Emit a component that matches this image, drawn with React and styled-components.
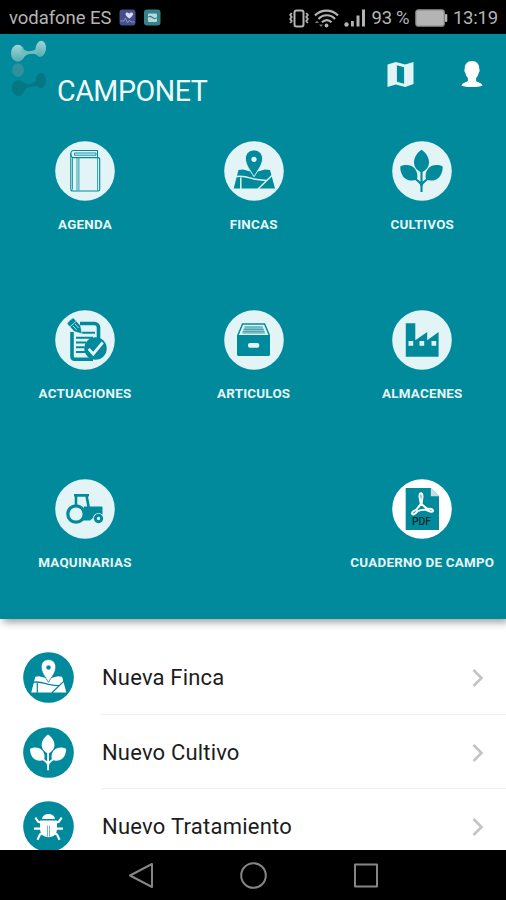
import React from "react";
import styled, { createGlobalStyle } from "styled-components";

const TEAL = "#008a9b";
const PALE = "#e2f4f5";

const GlobalStyle = createGlobalStyle`
  body { margin: 0; background: #fff; font-family: Roboto, "Liberation Sans", sans-serif; }
  svg { display: block; flex: none; }
`;

const Screen = styled.div`
  width: 506px;
  height: 900px;
  display: flex;
  flex-direction: column;
  overflow: hidden;
  background: #fff;
`;

const StatusBar = styled.div`
  height: 34px;
  flex: none;
  display: flex;
  align-items: center;
  justify-content: space-between;
  padding: 2px 8px 0 9px;
  box-sizing: border-box;
  background: #000;
  color: #b4b4b4;
`;

const StatusGroup = styled.div`
  display: flex;
  align-items: center;
  gap: ${(p) => p.$gap}px;
`;

const StatusText = styled.span`
  font-size: 18.5px;
  line-height: 22px;
  white-space: nowrap;
  letter-spacing: ${(p) => p.$track || 0}px;
`;

const Panel = styled.section`
  height: 585px;
  flex: none;
  position: relative;
  box-sizing: border-box;
  background: ${TEAL};
  box-shadow: 3px 3px 8px rgba(0, 0, 0, 0.4);
`;

const Header = styled.header`
  height: 107px;
  display: flex;
  align-items: flex-start;
  padding: 6px 23px 0 10px;
  box-sizing: border-box;
`;

const Title = styled.h1`
  margin: 34px auto 0 9px;
  font-size: 28.6px;
  line-height: 34px;
  font-weight: 400;
  letter-spacing: -0.45px;
  color: #f2fbfc;
`;

const HeaderActions = styled.div`
  display: flex;
  align-items: center;
  gap: 47px;
  margin-top: 21px;
`;

const Menu = styled.nav`
  display: grid;
  grid-template-columns: repeat(3, 168.67px);
  grid-auto-rows: 168.8px;
  padding-left: 0.7px;
`;

const MenuItem = styled.div`
  display: flex;
  flex-direction: column;
  align-items: center;
  grid-column: ${(p) => p.$column || "auto"};
`;

const MenuLabel = styled.span`
  margin-top: 15px;
  font-size: 13.4px;
  line-height: 18px;
  font-weight: 700;
  white-space: nowrap;
  letter-spacing: 0.22px;
  color: #e6f6f7;
`;

const List = styled.div`
  flex: 1;
  min-height: 0;
  overflow: hidden;
  padding-top: 21.5px;
`;

const ListRow = styled.div`
  height: 74.4px;
  display: flex;
  align-items: center;
  padding-left: 22.5px;
`;

const RowBody = styled.div`
  flex: 1;
  height: 100%;
  box-sizing: border-box;
  display: flex;
  align-items: center;
  justify-content: space-between;
  margin-left: 27px;
  padding: 2.6px 20px 0 1.5px;
  border-bottom: 1px solid #f0f0f0;
`;

const RowLabel = styled.span`
  font-size: 22px;
  line-height: 28px;
  letter-spacing: ${(p) => p.$track}px;
  color: #1c1c1c;
`;

const NavBar = styled.div`
  height: 50px;
  flex: none;
  display: flex;
  align-items: center;
  justify-content: center;
  gap: 86px;
  background: #000;
`;

const Disc = ({ size = 60, bg = PALE, children }) => (
  <svg width={size} height={size} viewBox="0 0 60 60">
    <circle cx="30" cy="30" r="29.8" fill={bg} />
    {children}
  </svg>
);

const Book = () => (
  <g fill="none" stroke={TEAL} strokeWidth="1.100" strokeLinejoin="round">
    <path d="M18.500 9.500H42.500v7.100H18.500c-3.600 0-3.600-7.100 0-7.100z" />
    <path d="M19.500 12H41v2.200H19.500z" strokeWidth="0.900" />
    <path d="M15.800 12.500V48c0 1.300.8 2 2 2H43c1.100 0 1.700-.7 1.700-1.700V18.300c0-1-.7-1.700-1.700-1.700" />
    <path d="M42.600 17v32.500M22 17v32.500M23.900 17v32.500M17.500 16v32.500" strokeWidth="0.800" />
  </g>
);

const FieldPin = ({ fg, bg }) => (
  <g>
    <path d="M14.500 29l4.500-.5 11 3 11-3 5 .5 5 18.500H9.700z" fill={fg} />
    <path d="M16.800 36.500V48M11 35.800c8-1.800 13 .6 19 2.200 4 .8 8 1.500 13 1.500M50 32.500L34 48" fill="none" stroke={bg} strokeWidth="1.500" />
    <path d="M30 8.900c5 0 8.600 3.700 8.600 8.600 0 6.400-4.600 11.500-8.600 18.200-4-6.700-8.600-11.800-8.600-18.200 0-4.900 3.600-8.600 8.600-8.600z" fill={fg} stroke={bg} strokeWidth="1" />
    <circle cx="30" cy="18.300" r="2.600" fill={bg} />
  </g>
);

const Plant = ({ fg }) => (
  <g>
    <g fill={fg}>
      <path d="M29.500 8.700c4.500 2.800 7.600 8 7.500 12.800-.1 4.300-2.500 7.600-7.500 10-5-2.400-7.400-5.700-7.500-10 -.1-4.800 3-10 7.500-12.800z" />
      <path d="M8.300 25.500c4.700-2.300 11.200-2 14.600 2.200 2.600 3.200 3 7 2 11.100-4.300 1.300-9 1.100-12-1.500-3.400-2.900-4.700-7.700-4.600-11.800z" />
      <path d="M50.700 25.500c-4.700-2.300-11.200-2-14.600 2.200-2.600 3.200-3 7-2 11.100 4.300 1.300 9 1.100 12-1.500 3.400-2.900 4.700-7.700 4.600-11.800z" />
    </g>
    <path d="M29.500 29v22M23.500 37.500c2 3.500 6 3 6 8M35.500 37.500c-2 3.500-6 3-6 8" fill="none" stroke={fg} strokeWidth="2.100" />
  </g>
);

const Checklist = () => (
  <g>
    <path d="M25 13.500h14.500a4 4 0 0 1 4 4V30M17 22v24.500a2.600 2.600 0 0 0 3 2.700H38" fill="none" stroke={TEAL} strokeWidth="3.600" />
    <path d="M27 22.800H40M21 27.700h17M21 32.500h10M21 37.200h8.500M21 42h9" stroke={TEAL} strokeWidth="2" />
    <circle cx="40.500" cy="38.500" r="11.200" fill={TEAL} />
    <path d="M33.700 38.800l4.500 5.200 9.500-11.500" fill="none" stroke={PALE} strokeWidth="2.800" />
    <g transform="rotate(-42 20 16)">
      <path d="M15.700 9.300c0-1.200 8.600-1.200 8.600 0v10.200L20 26.500l-4.300-7z" fill={TEAL} stroke={PALE} strokeWidth="0.500" />
      <path d="M16 13.200h8M18.600 14.500v5.500M21.400 14.500v5.500" stroke={PALE} strokeWidth="0.700" />
    </g>
  </g>
);

const FileBox = () => (
  <g>
    <path d="M13 25h33v19.500c0 .8-.6 1.400-1.400 1.400H14.400c-.8 0-1.400-.6-1.400-1.400z" fill={TEAL} />
    <path d="M13.800 25.500L18.600 14h22l4.800 11.500" fill="none" stroke={TEAL} strokeWidth="1.500" />
    <path d="M20.500 17h18.300l2.500 7H18z" fill="#93c9cd" />
    <path d="M20.500 16.800h18.300M19.500 19.300h20.300M18.500 21.800h22.300" stroke={TEAL} strokeWidth="0.700" />
    <rect x="24" y="33" width="11.300" height="4.700" rx="2" fill={PALE} />
  </g>
);

const Factory = () => (
  <g>
    <path d="M13.800 13.200h9.500v17L35.200 22v8.200L46.600 22v24.700H13.800z" fill={TEAL} />
    <path d="M16.500 31h4.700v4.700h-4.700zM27.500 31h4.700v4.700h-4.700zM39.500 31h4.700v4.700h-4.700z" fill={PALE} />
  </g>
);

const Tractor = () => (
  <g>
    <path d="M29 27.500H46.500c.5 0 1 .4 1 1V39h-9.500l-3 2.500h-7z" fill={TEAL} />
    <path d="M21 29V16.500h10.500l2.300 12.500M19 16.300h15" fill="none" stroke={TEAL} strokeWidth="2.600" />
    <circle cx="21" cy="35" r="8.200" fill={PALE} stroke={TEAL} strokeWidth="3.200" />
    <circle cx="43.500" cy="39.500" r="5.500" fill={PALE} />
    <circle cx="43.500" cy="39.500" r="3.200" fill={PALE} stroke={TEAL} strokeWidth="3" />
  </g>
);

const PdfText = styled.text`
  font: 500 10px Roboto, sans-serif;
`;

const Pdf = () => (
  <g>
    <path d="M13.700 9h25l8.300 8.300V51H13.700z" fill={TEAL} />
    <path d="M38.800 9v8.200H47z" fill="#c3dfe3" />
    <g fill={TEAL} stroke="#fff" strokeWidth="2" strokeLinejoin="round">
      <path d="M28.900 25c-1-4.500-2.500-10.500 0-10.700 2.700.2 1.200 6.200.6 10.700l5.200 4.400c3.200.2 6.600.6 6.200 2.600-.8 1.800-4.300 0-7-1.300-3.200-.3-6 .4-8.300 1.500-1.800 2.400-4.300 4-5.400 2.700-.9-1.500 1.900-3.200 4.200-4.300z" />
    </g>
    <PdfText x="20" y="46.300" textLength="19" lengthAdjust="spacingAndGlyphs" fill="#022a30">PDF</PdfText>
  </g>
);

const Bug = () => (
  <g fill="none" stroke="#fff" strokeWidth="2.500">
    <path d="M22.500 21.200c0-8 15-8 15 0z" fill="#fff" stroke="none" />
    <path d="M20 23h20v9c0 7-4 10.500-10 10.500S20 39 20 32z" fill="#fff" stroke="none" />
    <path d="M28.800 29v13M31.200 29v13" stroke={TEAL} strokeWidth="0.700" />
    <path d="M14.500 19.500l3.500 5 5 1.500M45.500 19.500l-3.500 5-5 1.500M13 32.500h10M47 32.500H37M17 45.500l3-6 4-2.500M43 45.500l-3-6-4-2.500" />
  </g>
);

const Logo = () => (
  <svg width="38" height="56" viewBox="0 0 38 56">
    <defs>
      <linearGradient id="molecule" x1="0" y1="0" x2="0" y2="1">
        <stop offset="0" stopColor="#9fd5d6" />
        <stop offset="1" stopColor="#55acb3" />
      </linearGradient>
    </defs>
    <ellipse cx="7.800" cy="13.300" rx="6.800" ry="8.500" fill="url(#molecule)" />
    <ellipse cx="30.700" cy="8.800" rx="5.300" ry="8" transform="rotate(8 30.700 8.800)" fill="url(#molecule)" />
    <path d="M11 7c4 5 10 5.500 16 1.500v6c-6-1.500-11-.5-14 4z" fill="#72bcc0" />
    <ellipse cx="8" cy="30" rx="6" ry="6.700" fill="#2e919b" />
    <g fill="#057783">
      <ellipse cx="8.500" cy="48" rx="6.300" ry="8" />
      <ellipse cx="31" cy="40.500" rx="5" ry="7.500" />
      <path d="M12 41.500c4 3.500 9 3.500 15-1v6c-6-1-10 0-14 5z" />
    </g>
  </svg>
);

const MapIcon = () => (
  <svg width="27" height="27" viewBox="0 0 27 27">
    <path d="M.5 3.500L8.800 1l9.400 2.500L26.500 1v22l-8.300 3-9.400-2.500L.5 26z" fill={PALE} />
    <path d="M9.900 4.300l7.200 2v16.400l-7.200-2z" fill={TEAL} />
  </svg>
);

const UserIcon = () => (
  <svg width="22" height="27" viewBox="0 0 22 27">
    <path d="M11 0c4.800 0 7.300 3.200 7.300 7.500 0 1 .3 1.300.3 2.200 0 1.200-.6 1.700-1 2.300-.4 2.300-1.400 3.800-2.500 5v3c1.700 1.500 5.500 1.400 6.400 4.700-4 1.700-17 1.700-21 0 .9-3.300 4.700-3.200 6.400-4.700v-3c-1.100-1.200-2.100-2.700-2.500-5-.4-.6-1-1.100-1-2.300 0-.9.3-1.200.3-2.200C3.700 3.200 6.200 0 11 0z" fill="#fff" />
  </svg>
);

const AppBadges = () => (
  <svg width="44" height="18" viewBox="0 0 44 18">
    <rect x=".5" y=".5" width="16" height="16" rx="3" fill="#454f8b" />
    <path d="M10.300 9.500C3 4.800 8.200 1.700 10.300 4.700c2.200-3 7.200.1 0 4.800z" fill="#d8dff3" />
    <path d="M1 12h4l1.500-3 2 5 2-3 1.500 2H15.500" fill="none" stroke="#8394ca" strokeWidth="1" />
    <rect x="25" y=".5" width="16.500" height="16" rx="3" fill="#37818a" />
    <rect x="29" y="4.500" width="9" height="8.500" rx="1" fill="#b6d8db" />
    <path d="M29.500 8c2-2 4 1 5.500 1.500 1 .3 2-.7 3-.5" fill="none" stroke="#37818a" strokeWidth="1.200" />
  </svg>
);

const VibrateIcon = () => (
  <svg width="20" height="19" viewBox="0 0 20 19" fill="none" stroke="#b4b4b4">
    <rect x="5.500" y="1.500" width="9" height="16" rx="2" strokeWidth="2" />
    <path d="M2.700 4l-1.500 2 1.500 2-1.500 2 1.500 2-1.500 2M17.300 4l1.500 2-1.500 2 1.500 2-1.500 2 1.500 2" strokeWidth="1.800" />
  </svg>
);

const WifiIcon = () => (
  <svg width="25" height="19" viewBox="0 0 25 19" fill="none" stroke="#b4b4b4" strokeWidth="2.200">
    <path d="M1 6.500c6-6.500 17-6.500 23 0M4.500 10c4.500-5 12-5 16.500 0M8 13.300c2.800-3 6.700-3 9.500 0" />
    <circle cx="12.500" cy="16.500" r="1.900" fill="#b4b4b4" stroke="none" />
    <path d="M1 14l2-2.500L5 14zM5 15.500h4L7 18z" fill="#777" stroke="none" />
  </svg>
);

const SignalIcon = () => (
  <svg width="22" height="18" viewBox="0 0 22 18" fill="#b4b4b4">
    <circle cx="2.500" cy="15.500" r="2.200" />
    <path d="M7 12h2.800v5.500H7zM12.500 6.500h3v11h-3zM18 .5h3v17h-3z" />
  </svg>
);

const BatteryIcon = () => (
  <svg width="33" height="18" viewBox="0 0 33 18">
    <rect x=".8" y=".8" width="28.500" height="16.400" rx="2.500" fill="#b4b4b4" stroke="#858585" strokeWidth="1.200" />
    <rect x="30" y="5" width="2.300" height="8" rx="1" fill="#b4b4b4" />
  </svg>
);

const Chevron = () => (
  <svg width="17" height="20" viewBox="0 0 17 20">
    <path d="M4.500 2l8 8-8 8" fill="none" stroke="#c4c4c4" strokeWidth="2.600" />
  </svg>
);

const NavShape = styled.svg`
  fill: none;
  stroke: #858585;
  stroke-width: 2;
  stroke-linejoin: round;
`;

const MENU = [
  { label: "AGENDA", icon: <Book /> },
  { label: "FINCAS", icon: <FieldPin fg={TEAL} bg={PALE} /> },
  { label: "CULTIVOS", icon: <Plant fg={TEAL} /> },
  { label: "ACTUACIONES", icon: <Checklist /> },
  { label: "ARTICULOS", icon: <FileBox /> },
  { label: "ALMACENES", icon: <Factory /> },
  { label: "MAQUINARIAS", icon: <Tractor /> },
  { label: "CUADERNO DE CAMPO", icon: <Pdf />, column: 3, bg: "#fff" },
];

const ROWS = [
  { label: "Nueva Finca", track: 0.18, icon: <FieldPin fg="#fff" bg={TEAL} /> },
  { label: "Nuevo Cultivo", track: 0.18, icon: <Plant fg="#fff" /> },
  { label: "Nuevo Tratamiento", track: 0.25, icon: <Bug /> },
];

export default function App() {
  return (
    <Screen>
      <GlobalStyle />
      <StatusBar>
        <StatusGroup $gap={8}>
          <StatusText $track={-0.05}>vodafone ES</StatusText>
          <AppBadges />
        </StatusGroup>
        <StatusGroup $gap={5.3}>
          <VibrateIcon />
          <WifiIcon />
          <SignalIcon />
          <StatusText $track={-0.3}>93 %</StatusText>
          <BatteryIcon />
          <StatusText $track={-0.2}>13:19</StatusText>
        </StatusGroup>
      </StatusBar>
      <Panel>
        <Header>
          <Logo />
          <Title>CAMPONET</Title>
          <HeaderActions>
            <MapIcon />
            <UserIcon />
          </HeaderActions>
        </Header>
        <Menu>
          {MENU.map((m) => (
            <MenuItem key={m.label} $column={m.column}>
              <Disc bg={m.bg}>{m.icon}</Disc>
              <MenuLabel>{m.label}</MenuLabel>
            </MenuItem>
          ))}
        </Menu>
      </Panel>
      <List>
        {ROWS.map((r) => (
          <ListRow key={r.label}>
            <Disc size={51} bg={TEAL}>{r.icon}</Disc>
            <RowBody>
              <RowLabel $track={r.track}>{r.label}</RowLabel>
              <Chevron />
            </RowBody>
          </ListRow>
        ))}
      </List>
      <NavBar>
        <NavShape width="27" height="27" viewBox="0 0 27 27"><path d="M25 2v23L3 13.500z" /></NavShape>
        <NavShape width="27" height="27" viewBox="0 0 27 27"><circle cx="13.500" cy="13.500" r="12.300" /></NavShape>
        <NavShape width="27" height="27" viewBox="0 0 27 27"><rect x="2" y="2.500" width="22" height="22" /></NavShape>
      </NavBar>
    </Screen>
  );
}
